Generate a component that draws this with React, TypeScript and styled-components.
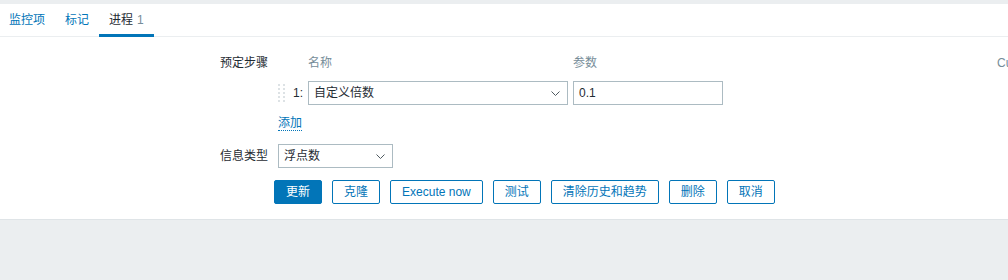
import React from "react";
import styled, { createGlobalStyle } from "styled-components";

const Global = createGlobalStyle`
  html, body {
    margin: 0;
    padding: 0;
    background: #ebeef0;
    overflow: hidden;
  }
  body {
    font-family: "Liberation Sans", Arial, "Noto Sans CJK SC", sans-serif;
    font-size: 12px;
    color: #1f2c33;
  }
`;

const Page = styled.div`
  padding-top: 4px;
  width: 1008px;
  height: 280px;
  box-sizing: border-box;
  overflow: hidden;
`;

const Panel = styled.div`
  background: #ffffff;
  border-bottom: 1px solid #dfe4e7;
  padding-bottom: 15px;
`;

const TabList = styled.div`
  display: flex;
  height: 33px;
  box-sizing: border-box;
  border-bottom: 1px solid #ebeef0;
  padding-left: 0;
`;

const Tab = styled.div<{ $active?: boolean }>`
  position: relative;
  height: 32px;
  line-height: 32px;
  padding: 0 10px 0 9px;
  margin-right: 1px;
  color: ${(p) => (p.$active ? "#1f2c33" : "#0275b8")};
  white-space: nowrap;
  &::after {
    content: "";
    display: ${(p) => (p.$active ? "block" : "none")};
    position: absolute;
    left: -1px;
    right: 0;
    bottom: -1px;
    height: 3px;
    background: #0275b8;
  }
`;

const Count = styled.span`
  color: #768d99;
  margin-left: 4px;
`;

const Form = styled.div`
  padding-top: 19px;
  display: flex;
  flex-direction: column;
`;

const FormRow = styled.div<{ $top?: number }>`
  display: flex;
  align-items: flex-start;
  margin-top: ${(p) => p.$top ?? 0}px;
`;

const Label = styled.div<{ $lh?: number }>`
  width: 278px;
  flex: none;
  text-align: right;
  padding-right: 10px;
  box-sizing: border-box;
  line-height: ${(p) => p.$lh ?? 14}px;
  white-space: nowrap;
`;

const StepsGrid = styled.div`
  display: grid;
  grid-template-columns: 10px 10px 260px 150px 264px 120px;
  column-gap: 5px;
  row-gap: 11px;
  align-items: center;
`;

const HeadCell = styled.div<{ $col: number }>`
  grid-column: ${(p) => p.$col};
  color: #768d99;
  line-height: 14px;
  white-space: nowrap;
`;

const Handle = styled.div`
  grid-column: 1;
  display: flex;
  align-items: center;
  height: 24px;
`;

const Num = styled.div`
  grid-column: 2;
  text-align: right;
  line-height: 24px;
  white-space: nowrap;
`;

const SelectBox = styled.div<{ $w: number }>`
  position: relative;
  width: ${(p) => p.$w}px;
  height: 24px;
  box-sizing: border-box;
  border: 1px solid #acbbc2;
  background: #fff;
  padding: 0 20px 0 5px;
  line-height: 22px;
  white-space: nowrap;
`;

const Chevron = styled.svg`
  position: absolute;
  right: 7px;
  top: 9px;
`;

const TextInput = styled.div`
  width: 150px;
  height: 24px;
  box-sizing: border-box;
  border: 1px solid #acbbc2;
  padding: 0 5px;
  line-height: 22px;
`;

const AddLink = styled.a`
  grid-column: 1 / span 3;
  justify-self: start;
  color: #0275b8;
  line-height: 14px;
  text-decoration: none;
  border-bottom: 1px dotted #0275b8;
  cursor: pointer;
`;

const ButtonBar = styled.div`
  display: flex;
  gap: 10px;
  padding-left: 274px;
  margin-top: 12px;
`;

const Button = styled.button<{ $primary?: boolean }>`
  height: 24px;
  box-sizing: border-box;
  padding: 0 11px;
  border: 1px solid #0275b8;
  border-radius: 2px;
  background: ${(p) => (p.$primary ? "#0275b8" : "#ffffff")};
  color: ${(p) => (p.$primary ? "#ffffff" : "#0275b8")};
  font-family: "Liberation Sans", Arial, "Noto Sans CJK SC", sans-serif;
  font-size: 12px;
  line-height: 22px;
  white-space: nowrap;
  cursor: pointer;
`;

const Arrow = () => (
  <Chevron width="9" height="5" viewBox="0 0 9 5">
    <path d="M0.5 0.5 L4.5 4.5 L8.5 0.5" fill="none" stroke="#4f5a60" strokeWidth="1" />
  </Chevron>
);

const DragDots = () => (
  <svg width="8" height="19" viewBox="0 0 8 19">
    {[0, 4, 8, 12, 16].map((y) =>
      [0, 5].map((x) => <rect key={`${x}-${y}`} x={x} y={y} width="2" height="2" fill="#dde2e5" />)
    )}
  </svg>
);

export default function App() {
  return (
    <Page>
      <Global />
      <Panel>
        <TabList>
          <Tab>监控项</Tab>
          <Tab>标记</Tab>
          <Tab $active>
            进程<Count>1</Count>
          </Tab>
        </TabList>
        <Form>
          <FormRow>
            <Label>预定步骤</Label>
            <StepsGrid>
              <HeadCell $col={3}>名称</HeadCell>
              <HeadCell $col={4}>参数</HeadCell>
              <HeadCell $col={6}>Custom on fail</HeadCell>
              <Handle>
                <DragDots />
              </Handle>
              <Num>1:</Num>
              <SelectBox $w={260}>
                自定义倍数
                <Arrow />
              </SelectBox>
              <TextInput>0.1</TextInput>
              <AddLink>添加</AddLink>
            </StepsGrid>
          </FormRow>
          <FormRow $top={13}>
            <Label $lh={24}>信息类型</Label>
            <SelectBox $w={115}>
              浮点数
              <Arrow />
            </SelectBox>
          </FormRow>
          <ButtonBar>
            <Button $primary>更新</Button>
            <Button>克隆</Button>
            <Button>Execute now</Button>
            <Button>测试</Button>
            <Button>清除历史和趋势</Button>
            <Button>删除</Button>
            <Button>取消</Button>
          </ButtonBar>
        </Form>
      </Panel>
    </Page>
  );
}
